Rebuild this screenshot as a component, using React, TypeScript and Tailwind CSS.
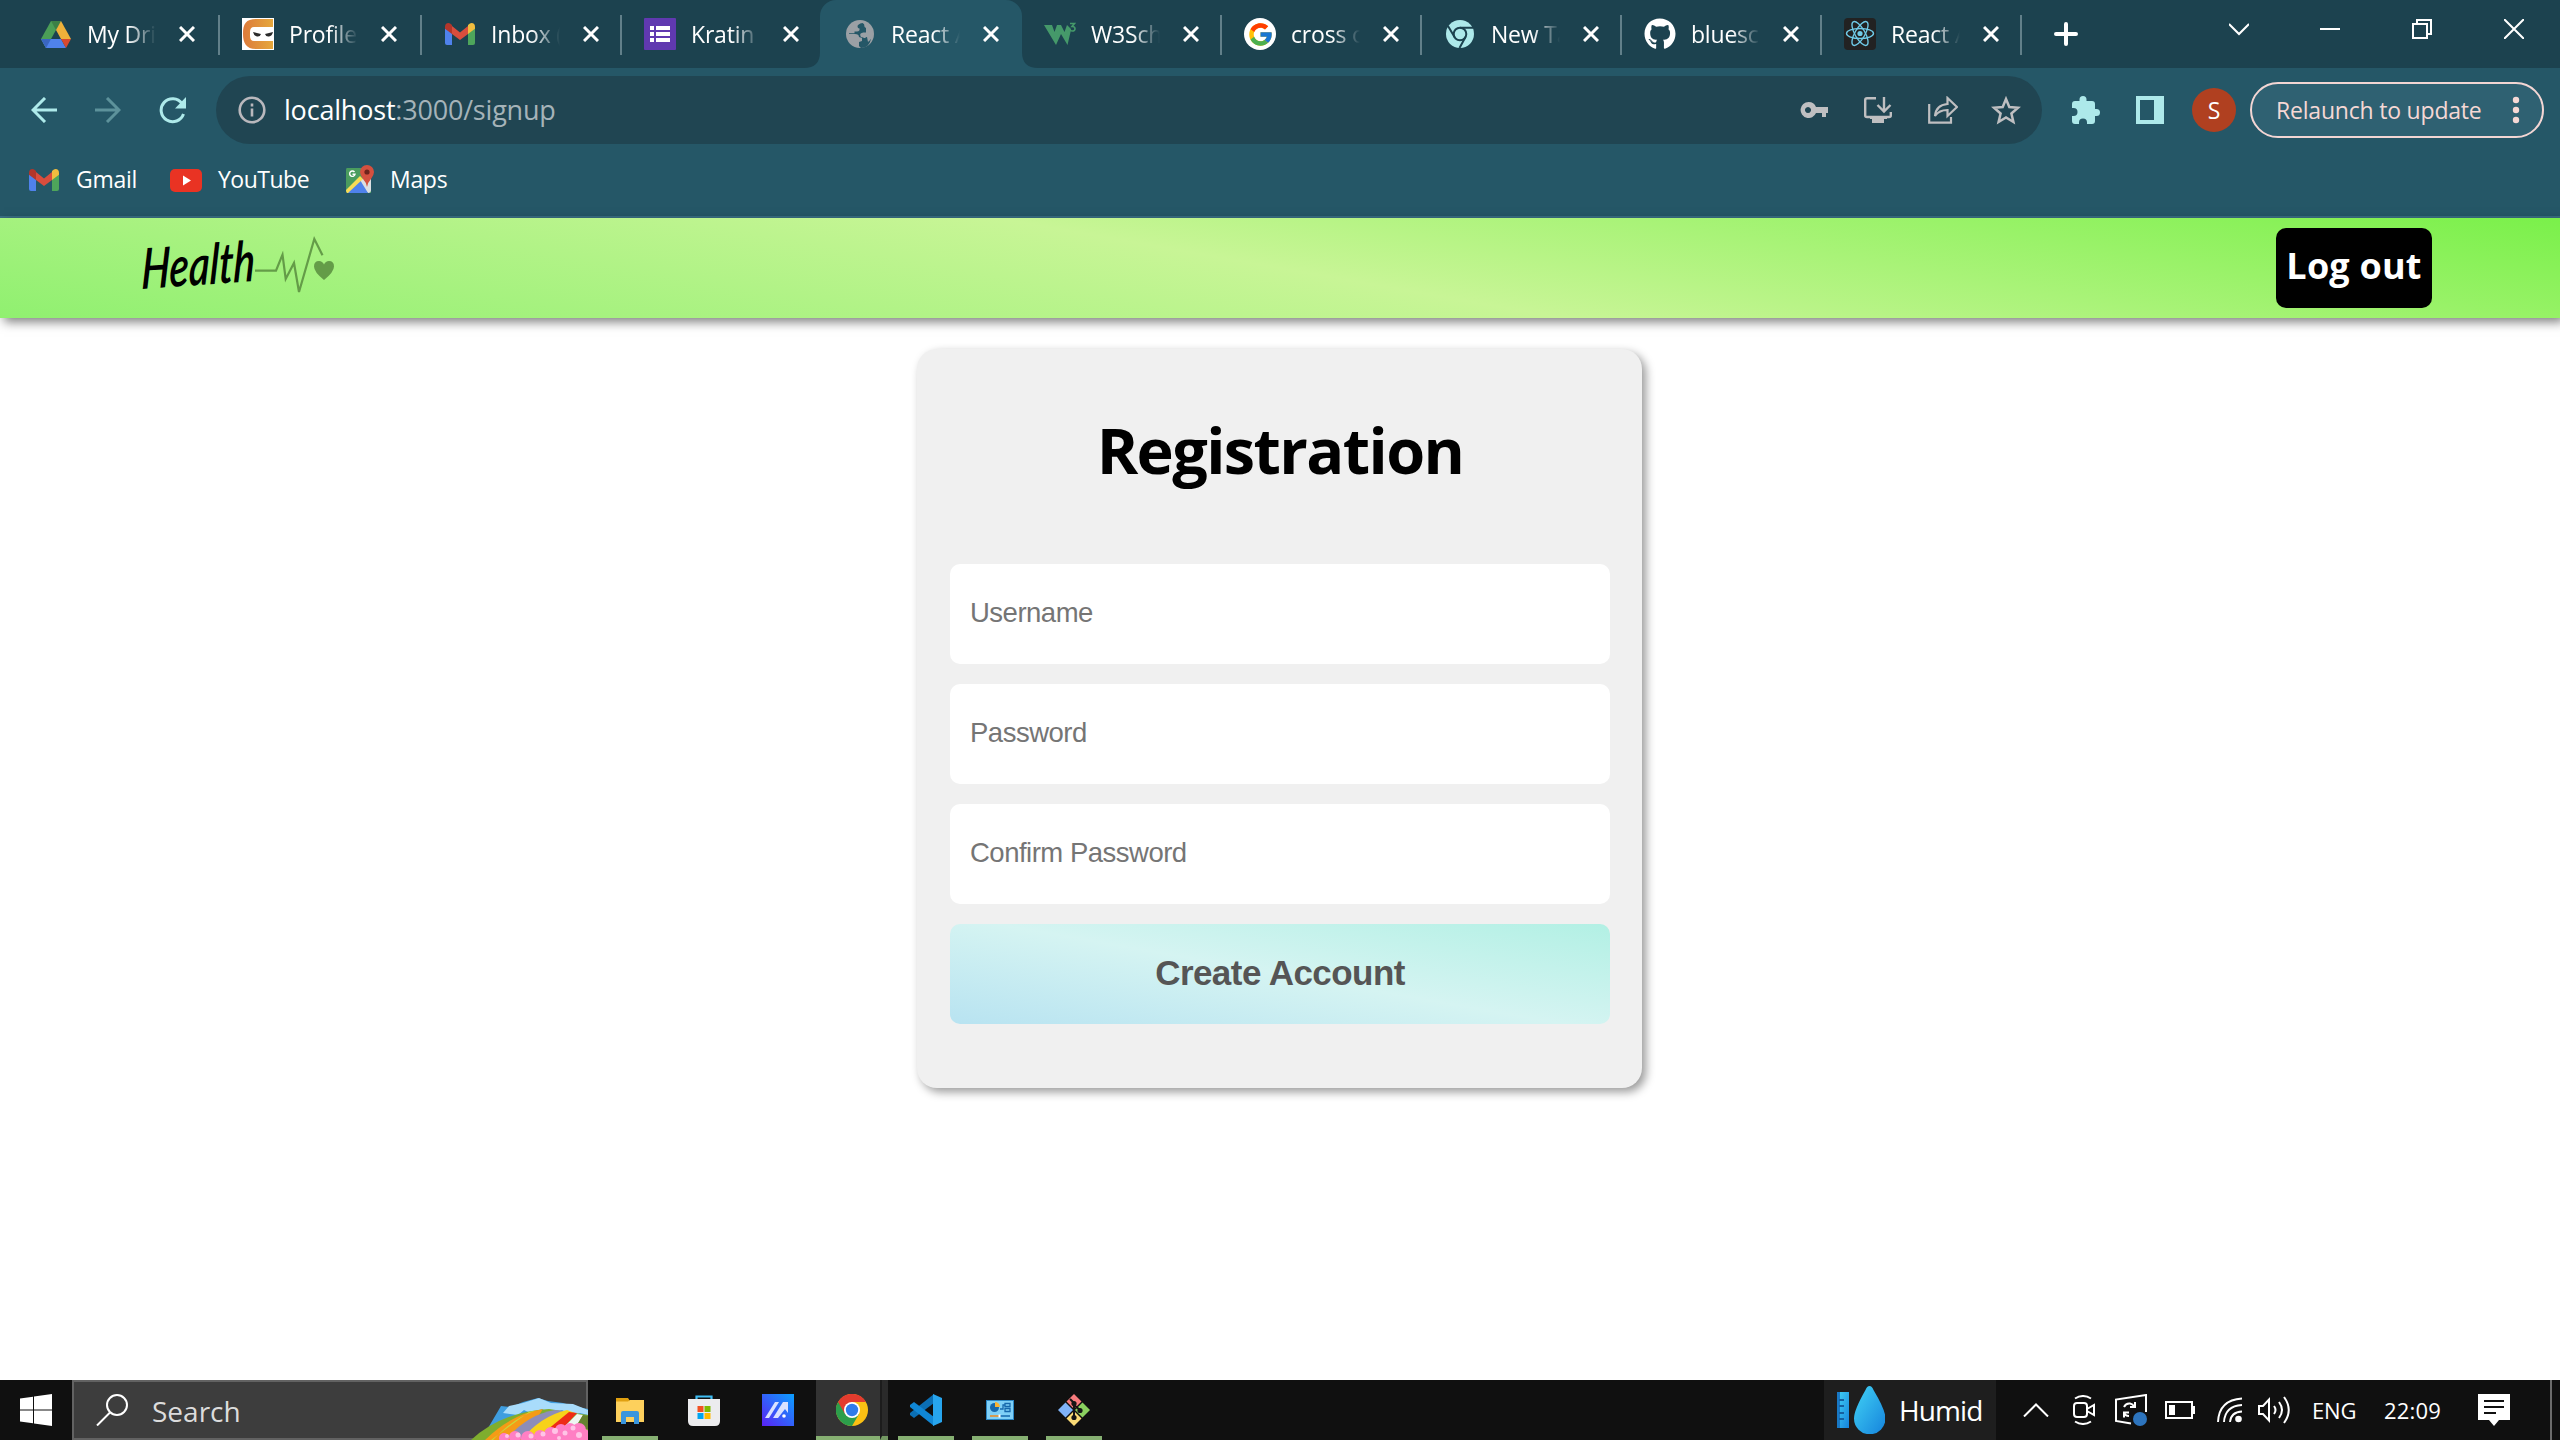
import React from "react";
import { FcGoogle } from "react-icons/fc";
import { FaGithub } from "react-icons/fa";

function Drive() {
  return (
    <svg viewBox="0 0 30 27" className="h-[27px] w-[30px]">
      <path d="M10 0h10L10 18 5 27 0 18z" fill="#4b9e57" />
      <path d="M10 0h10l-5 9z" fill="#3c8046" />
      <path d="M20 0l10 18H20l-5-9z" fill="#efb13a" />
      <path d="M10 18h10l5 9H5l-5-9z" fill="#4f82ec" />
      <path d="M5 27l5-9H0z" fill="#3a66c0" />
      <path d="M20 18h10l-5 9z" fill="#d8492f" />
    </svg>
  );
}

function Ninja() {
  return (
    <svg viewBox="0 0 32 32" className="size-8">
      <defs>
        <linearGradient id="cn">
          <stop stopColor="#dc7a3a" />
          <stop offset="1" stopColor="#e6a83c" />
        </linearGradient>
      </defs>
      <path d="M0 0h32v32H0z" fill="#fff" />
      <path d="M31 1H14C4 1 1 6 1 15.500S4 31 14 31h17v-8H12q-4 0-4-5v-4q0-5 4-5h19z" fill="url(#cn)" />
      <path d="M11 14l8 2q-1 3-4 2.500-3-.5-4-4.500zM31 14l-8 2q1 3 4 2.500 3-.5 4-4.500z" fill="#2b2b2b" />
    </svg>
  );
}

function Gmail() {
  return (
    <svg viewBox="0 0 30 22" className="h-[22px] w-[30px]">
      <path d="M0 5v15q0 2 2 2h5V10z" fill="#4f82ec" />
      <path d="M30 5v15q0 2-2 2h-5V10z" fill="#4ea55b" />
      <path d="M7 3l8 6.500L23 3v8l-8 6-8-6z" fill="#d94d3d" />
      <path d="M0 4q0-4 3.500-4Q5 0 7 2v9L0 5.800z" fill="#b3362b" />
      <path d="M30 4q0-4-3.500-4Q25 0 23 2v9l7-5.200z" fill="#f1bd3f" />
    </svg>
  );
}

function Forms() {
  return (
    <svg viewBox="0 0 32 32" className="size-8">
      <rect width="32" height="32" rx="1" fill="#6039b0" />
      <path d="M6 8h4v4H6zm6 0h14v4H12zM6 14h4v4H6zm6 0h14v4H12zM6 20h4v4H6zm6 0h14v4H12z" fill="#fff" />
    </svg>
  );
}

function Globe() {
  return (
    <svg viewBox="0 0 28 28" className="size-7">
      <circle cx="14" cy="14" r="14" fill="#9ba0a5" />
      <path
        d="M16.500 3q-5 1-5 3.500 0 2 2 2 .5 3-2.500 3H8.500v2H3q-.5 3 1 5.500h5.500q2.500 0 2.500 3v3l3 3q8 0 10-9l-1-4-2-2v3l-3 2h-4l-1-3 2-2h4V8q-2-1-2-4z"
        fill="#255767"
      />
      <path d="M3 13.500h8q3.500 0 3.500 3.500l3 .5V21l-3 1v3.500Q4 25 3 13.500z" fill="#255767" />
      <path d="M2 14h7q4 0 4 3l3 1v3l-3 1v4.500Q2 26 2 14zM17 3l7 4 1.500 4-4.500 1.500h-4L14 14l3 3h4l1 5q5-4 5-9-1-8-10-11z" fill="#9ba0a5" />
    </svg>
  );
}

function W3() {
  return (
    <svg viewBox="0 0 32 24" className="h-6 w-8">
      <path d="M0 3h8l2.500 7L13 3h4l3.500 7L23 3l4 4v1l-3.500 15L17 12l-5 11z" fill="#45996a" />
      <path d="M26 1.500h4.500L28 4.500q3 0 3 2.200Q31 9 28.200 9q-2 0-2.700-1.300" fill="none" stroke="#45996a" strokeWidth="1.600" />
    </svg>
  );
}

function Google() {
  return (
    <div className="flex size-8 items-center justify-center rounded-full bg-white">
      <FcGoogle size={27} />
    </div>
  );
}

function ChromeMono() {
  return (
    <svg viewBox="0 0 28 28" className="size-7">
      <circle cx="14" cy="14" r="14" fill="#ade9ea" />
      <circle cx="14" cy="14" r="6.300" fill="none" stroke="#1c424f" strokeWidth="2" />
      <path d="M14 7.700h13M8.500 17L2 6M19.500 17l-6 11" stroke="#1c424f" strokeWidth="2" />
    </svg>
  );
}

function ReactLogo() {
  return (
    <svg viewBox="0 0 32 32" className="size-8">
      <rect width="32" height="32" rx="4" fill="#222" />
      <g fill="none" stroke="#6fcbe8" strokeWidth="1.400">
        <ellipse cx="16" cy="15.500" rx="13.500" ry="5" />
        <ellipse cx="16" cy="15.500" rx="13.500" ry="5" transform="rotate(60 16 15.500)" />
        <ellipse cx="16" cy="15.500" rx="13.500" ry="5" transform="rotate(120 16 15.500)" />
      </g>
      <circle cx="16" cy="15.500" r="2.600" fill="#6fcbe8" />
    </svg>
  );
}

const tabs = [
  { t: "My Drive", w: "w-[202px] pl-[22px]", icon: <Drive /> },
  { t: "Profile |", w: "w-[202px] pl-[22px]", icon: <Ninja /> },
  { t: "Inbox (", w: "w-[200px] pl-[22px]", icon: <Gmail /> },
  { t: "Kratin -", w: "w-[198px] pl-[22px]", icon: <Forms /> },
  { t: "React App", w: "w-[202px] pl-[24px]", icon: <Globe />, active: true },
  { t: "W3Scho", w: "w-[200px] pl-[22px]", icon: <W3 /> },
  { t: "cross ori", w: "w-[200px] pl-[22px]", icon: <Google /> },
  { t: "New Tab", w: "w-[200px] pl-[22px]", icon: <ChromeMono /> },
  { t: "bluesco", w: "w-[200px] pl-[22px]", icon: <FaGithub size={32} color="#fff" /> },
  { t: "React App", w: "w-[200px] pl-[22px]", icon: <ReactLogo /> },
];

function Corner({ flip = false }: { flip?: boolean }) {
  return (
    <svg
      viewBox="0 0 16 16"
      className={flip ? "absolute bottom-0 left-full size-4 -scale-x-100" : "absolute right-full bottom-0 size-4"}
    >
      <path d="M16 0v16H0Q16 16 16 0z" fill="#255767" />
    </svg>
  );
}

function TabStrip() {
  return (
    <div className="flex h-[68px] bg-[#1c424f] pl-[18px] text-white">
      {tabs.map((tab, i) => (
        <div
          key={i}
          className={"relative flex h-full shrink-0 items-center " + tab.w + (tab.active ? " rounded-t-2xl bg-[#255767]" : "")}
        >
          {tab.active && (
            <>
              <Corner />
              <Corner flip />
            </>
          )}
          <div className="flex w-8 shrink-0 items-center justify-center">{tab.icon}</div>
          <div className="ml-[15px] w-[69px] shrink-0 overflow-hidden [mask-image:linear-gradient(90deg,#000_60%,transparent_100%)]">
            <span className="text-[23px] leading-8 tracking-[-0.2px] whitespace-nowrap">{tab.t}</span>
          </div>
          <svg viewBox="0 0 16 16" className="ml-[23px] size-4 shrink-0" stroke="#fff" strokeWidth="3">
            <path d="M1 1l14 14M15 1L1 15" />
          </svg>
          {!tab.active && i !== 3 && <div className="absolute top-[15px] right-0 h-10 w-0.5 bg-[#62808a]" />}
        </div>
      ))}
      <svg viewBox="0 0 24 24" className="mt-[22px] ml-[32px] size-6 shrink-0" stroke="#fff" strokeWidth="4" strokeLinecap="round">
        <path d="M12 2v20M2 12h20" />
      </svg>
      <svg viewBox="0 0 20 20" className="mt-[19px] ml-[151px] size-5 shrink-0" fill="none" stroke="#fff" strokeWidth="2">
        <path d="M0 5l10 10L20 5" />
      </svg>
      <div className="mt-7 ml-[71px] h-0.5 w-5 bg-white" />
      <svg viewBox="0 0 20 20" className="mt-[19px] ml-[72px] size-5 shrink-0" fill="none" stroke="#fff" strokeWidth="2">
        <path d="M1 5h14v14H1zM5 5V1h14v14h-4" />
      </svg>
      <svg viewBox="0 0 20 20" className="mt-[19px] ml-[72px] size-5 shrink-0" stroke="#fff" strokeWidth="2">
        <path d="M0 0l20 20M20 0L0 20" />
      </svg>
    </div>
  );
}

function Toolbar() {
  return (
    <div className="flex h-[84px] items-center bg-[#255767] pl-[31px]">
      <svg viewBox="0 0 26 26" className="size-[26px]" fill="none" stroke="#aeeaea" strokeWidth="3">
        <path d="M26 13H3M14 1L2 13l12 12" />
      </svg>
      <svg viewBox="0 0 26 26" className="ml-[38px] size-[26px]" fill="none" stroke="#5d929b" strokeWidth="3">
        <path d="M0 13h23M12 1l12 12-12 12" />
      </svg>
      <svg viewBox="0 0 27 27" className="ml-[38px] size-[27px]" fill="none" stroke="#aeeaea" strokeWidth="3">
        <path d="M23 6.500A11.500 11.500 0 1 0 24.500 17" />
        <path d="M27 0v11.500H16z" fill="#aeeaea" stroke="none" />
      </svg>
      <div className="ml-[30px] flex h-[68px] w-[1826px] items-center rounded-full bg-[#204552] pl-[22px]">
        <svg viewBox="0 0 28 28" className="size-7" fill="none" stroke="#b9b8bd" strokeWidth="2.600">
          <circle cx="14" cy="14" r="12.300" />
          <path d="M14 12.500V20.500M14 7.500v3" />
        </svg>
        <span className="ml-[18px] w-[1399px] text-[27px] leading-8 tracking-[-0.2px] text-white">
          localhost<span className="text-[#a5b3b9]">:3000/signup</span>
        </span>
        <svg viewBox="0 0 28 16" className="ml-[117px] h-4 w-7" fill="#bfbfc1">
          <path fillRule="evenodd" d="M8.500 0a8 8 0 0 1 7.500 5H28v6h-2v4h-4v-4h-6A8 8 0 1 1 8.500 0zM8 5a3 3 0 1 0 .01 0z" />
        </svg>
        <svg viewBox="0 0 28 26" className="ml-9 h-[26px] w-7" fill="none" stroke="#bfbfc1" strokeWidth="2.400">
          <path d="M12 1.200H3Q1.200 1.200 1.200 3v15.500q0 1.500 1.800 1.500h22q1.800 0 1.800-1.500V15M20 0v14M13.500 8l6.500 6.500L26.500 8" />
          <path d="M6 20h17v2h-3v4H8v-4H6z" fill="#bfbfc1" stroke="none" />
        </svg>
        <svg viewBox="0 0 30 28" className="ml-9 h-7 w-[30px]" fill="none" stroke="#bfbfc1" strokeWidth="2.200">
          <path d="M1.200 8v18.700H23V21M19.500 2v6Q8 9 7 20q4-6 12.500-6v6L29 11z" />
        </svg>
        <svg viewBox="0 0 30 29" className="ml-[33px] h-[29px] w-[30px]" fill="none" stroke="#bfbfc1" strokeWidth="2.500">
          <path d="M15 3l3.300 8 8.700.8-6.600 5.700 2 8.500L15 21.500 7.600 26l2-8.500L3 11.800l8.700-.8z" />
        </svg>
      </div>
      <svg viewBox="0 0 30 30" className="ml-[29px] size-[30px]" fill="#ade9ea">
        <path d="M8.500 6V4.500a3.500 3.500 0 0 1 7 0V6H21q3 0 3 3v5h1.500a3.500 3.500 0 0 1 0 7H24v5q0 3-3 3h-5v-1.500a4 4 0 0 0-8 0V29H4q-3 0-3-3v-5h1.500a4 4 0 0 0 0-8H1V9q0-3 3-3z" />
      </svg>
      <svg viewBox="0 0 28 28" className="ml-[35px] size-7">
        <path fillRule="evenodd" d="M0 0h28v28H0zM4 4v20h14V4z" fill="#ade9ea" />
      </svg>
      <div className="ml-7 flex size-11 items-center justify-center rounded-full bg-[#b04020] text-[23px] text-white">S</div>
      <div className="ml-[14px] flex h-14 w-[294px] items-center rounded-full border-2 border-[#f3d6d4] bg-[#2f6172] pl-6 text-[#f5d8d5]">
        <span className="w-[215px] text-[23px] tracking-[-0.2px] whitespace-nowrap">Relaunch to update</span>
        <svg viewBox="0 0 8 28" className="ml-[21px] h-7 w-2" fill="#f5d8d5">
          <circle cx="4" cy="4" r="3.200" />
          <circle cx="4" cy="14" r="3.200" />
          <circle cx="4" cy="24" r="3.200" />
        </svg>
      </div>
    </div>
  );
}

function Bookmarks() {
  return (
    <div className="flex h-[66px] items-center border-b-2 border-[#3a7084] bg-[#255767] pb-2 pl-[29px] text-[23px] tracking-[-0.3px] text-white">
      <Gmail />
      <span className="-mt-0.5 ml-[17px] w-[94px]">Gmail</span>
      <svg viewBox="0 0 32 23" className="h-[23px] w-8">
        <rect width="32" height="23" rx="5" fill="#e93323" />
        <path d="M13 6.500l8 5-8 5z" fill="#fff" />
      </svg>
      <span className="-mt-0.5 ml-4 w-[127px] tracking-[-0.5px]">YouTube</span>
      <svg viewBox="0 0 30 30" className="size-[30px]">
        <path d="M2 3h24v25H2q-1-1-1-3V5q0-2 1-2z" fill="#4a9c5e" />
        <path d="M13 17l13-9v17q0 3-3 3z" fill="#dcdfe2" />
        <path d="M15 15l-13 13h21z" fill="#4f82ec" />
        <path d="M1 25L15 11l3 3L3 28H2q-1-1-1-3z" fill="#f9dc55" />
        <path d="M22 0a7 7 0 0 1 7 7q0 3-3 7-3 3-4 8-1-5-4-8-3-4-3-7a7 7 0 0 1 7-7z" fill="#d4503f" />
        <circle cx="22" cy="7" r="2.600" fill="#6e231c" />
        <path d="M9.500 7A2.700 2.700 0 1 0 10 9.300H7.500" fill="none" stroke="#fff" strokeWidth="1.400" />
      </svg>
      <span className="-mt-0.5 ml-[15px]">Maps</span>
    </div>
  );
}

function SiteHeader() {
  return (
    <header className="relative flex h-[100px] items-start justify-between bg-[linear-gradient(10deg,#90f070_0%,#c8f596_50%,#7af04a_100%)] pr-32 pl-[142px] shadow-[4px_4px_10px_rgba(0,0,0,0.5)]">
      <div className="flex h-full">
        <span className="mt-[20px] block w-[114px] origin-bottom-left -rotate-[4deg] font-['Lato',sans-serif] text-[56px] leading-[60px] font-semibold text-black italic">
          <span className="block origin-bottom-left scale-x-[0.72] -skew-x-8">Health</span>
        </span>
        <svg viewBox="0 0 80 60" className="mt-[18px] -ml-px h-[60px] w-20" fill="none" stroke="#649c48" strokeWidth="2.200">
          <path d="M0 34.700h21l6.500-16L30.700 43 39 27l5 29L59.300 3l8.200 16.300" />
          <path d="M69 44q-10-8-10-13.500 0-5.500 5-5.500 3.500 0 5 3.500 1.500-3.500 5-3.500 5 0 5 5.500Q79 36 69 44z" fill="#649c48" stroke="none" />
        </svg>
      </div>
      <button className="mt-2.5 flex h-20 w-[156px] items-center justify-center rounded-[10px] bg-black pb-1 text-[36px] font-bold tracking-[0.2px] whitespace-nowrap text-white">
        Log out
      </button>
    </header>
  );
}

const field =
  "h-[100px] w-full rounded-[10px] bg-white px-5 pb-0.5 font-['Liberation_Sans',sans-serif] text-[27.500px] tracking-[-0.5px] text-[#757575] placeholder-[#757575] outline-none";

function Page() {
  return (
    <main className="flex flex-1 flex-col bg-white">
      <SiteHeader />
      <form className="mt-[31px] ml-[917px] flex h-[739px] w-[725px] flex-col items-center gap-5 rounded-[20px] bg-[#f0f0f0] pr-8 pl-[33px] shadow-[4px_4px_10px_rgba(0,0,0,0.4)]">
        <h1 className="mt-[57px] mb-[51px] text-[63px] leading-[87px] font-bold tracking-[-1.6px] text-black">Registration</h1>
        <input className={field} placeholder="Username" />
        <input className={field} placeholder="Password" />
        <input className={field} placeholder="Confirm Password" />
        <button
          type="button"
          className="h-[100px] w-full rounded-[10px] bg-[linear-gradient(10deg,#b8e3f1_0%,#d5f4f2_50%,#b2f0e4_100%)] pb-0.5 font-['Liberation_Sans',sans-serif] text-[35px] font-bold tracking-[-0.55px] text-[#555]"
        >
          Create Account
        </button>
      </form>
    </main>
  );
}

function SearchArt() {
  return (
    <svg viewBox="0 0 117 42" className="h-[42px] w-[117px]">
      <path d="M10 42L30 8l10 1 12-5 15-4 10 3 15 2 10 3 15 3v31z" fill="#3f9ee0" />
      <path d="M32 15l6-7 14-3 16-5 12 5 22 1 15 6v5l-8-2-8 3-10-6-10 4-10-5-10 5-8-4-6 5z" fill="#a9dcfb" />
      <path d="M0 42Q30 14 78 11l39 6v25z" fill="#7fae2e" />
      <path d="M14 42Q40 16 72 11L52 42z" fill="#f59b16" />
      <path d="M22 42Q42 20 66 12l-8 2-38 28z" fill="#c8d93a" />
      <path d="M36 40Q58 16 84 12l10 1L56 42z" fill="#8d8db8" />
      <path d="M50 42Q70 18 96 12l8 3-26 24z" fill="#f7d21a" />
      <path d="M76 32l22-18 8 1-14 15z" fill="#ee2b16" />
      <path d="M92 30l14-14 6 1-8 14z" fill="#eef6f1" />
      <path d="M104 30l8-13 5 1v13z" fill="#66832f" />
      <g fill="#ff7fc4">
        <circle cx="33" cy="40" r="5" /><circle cx="44" cy="39" r="6" /><circle cx="57" cy="40" r="7" />
        <circle cx="69" cy="38" r="6" /><circle cx="80" cy="36" r="7" /><circle cx="90" cy="32" r="6" />
        <circle cx="99" cy="31" r="6" /><circle cx="108" cy="32" r="7" /><circle cx="113" cy="37" r="6" />
        <path d="M75 34h42v8H70z" />
      </g>
      <g fill="#ffc4e6">
        <circle cx="36" cy="38" r="2" /><circle cx="47" cy="37" r="2.500" /><circle cx="60" cy="38" r="2.500" />
        <circle cx="72" cy="36" r="2.500" /><circle cx="84" cy="33" r="3" /><circle cx="94" cy="35" r="2.500" />
        <circle cx="102" cy="30" r="2.500" /><circle cx="108" cy="37" r="3" /><circle cx="88" cy="40" r="2" />
      </g>
    </svg>
  );
}

const apps = [
  {
    run: true,
    icon: (
      <svg viewBox="0 0 28 26" className="mt-[2px] h-[26px] w-7">
        <path d="M0 0h12l2 3v4H0z" fill="#e0a010" />
        <path d="M0 3.500h12l2-1.500h14v22H0z" fill="#fdd05c" />
        <path d="M5 15q0-2 2-2h14q2 0 2 2v11h-5v-7h-8v7H5z" fill="#3a96dd" />
      </svg>
    ),
  },
  {
    icon: (
      <svg viewBox="0 0 32 32" className="size-8">
        <path d="M8.500 7V2.500h15V7" fill="none" stroke="#3fbdf3" strokeWidth="2.200" />
        <path d="M0 5h32v22q0 5-5 5H5q-5 0-5-5z" fill="#ececee" />
        <path d="M9.500 12h6v6h-6z" fill="#f25022" />
        <path d="M16.500 12h6v6h-6z" fill="#7fba00" />
        <path d="M9.500 19h6v6h-6z" fill="#00a4ef" />
        <path d="M16.500 19h6v6h-6z" fill="#ffb900" />
      </svg>
    ),
  },
  {
    icon: (
      <svg viewBox="0 0 32 32" className="size-8">
        <defs>
          <linearGradient id="ma" x1="0" y1="1" x2="1" y2="0">
            <stop stopColor="#5a22f5" />
            <stop offset="1" stopColor="#0aa0ff" />
          </linearGradient>
        </defs>
        <path d="M0 0h32v32H0z" fill="url(#ma)" />
        <path d="M3 24L13 8h4L7 24zM11 24L21 8h5v11l-3-4-7 9z" fill="#d9e2ff" />
        <circle cx="22" cy="22" r="1.800" fill="#fff" />
      </svg>
    ),
  },
  {
    run: true,
    active: true,
    icon: (
      <svg viewBox="0 0 32 32" className="size-8">
        <circle cx="16" cy="16" r="16" fill="#fbc013" />
        <path d="M2.100 8A16 16 0 0 0 16 32l7-12-7-4z" fill="#2c9e4b" />
        <path d="M16 8h13.900A16 16 0 0 0 2.100 8L9 20z" fill="#e33b2e" />
        <circle cx="16" cy="16" r="8" fill="#fff" />
        <circle cx="16" cy="16" r="6.200" fill="#2f7bea" />
      </svg>
    ),
  },
  {
    run: true,
    icon: (
      <svg viewBox="0 0 32 32" className="size-8">
        <path d="M24 0v9L4 24l-4-3v-2z" fill="#0b6fb5" />
        <path d="M24 32v-9L4 8 0 11v2z" fill="#1087d6" />
        <path d="M23 0l9 4v24l-9 4z" fill="#27a5ee" />
      </svg>
    ),
  },
  {
    run: true,
    icon: (
      <svg viewBox="0 0 28 20" className="h-5 w-7">
        <path d="M0 0h28v20H0z" fill="#2a86c4" />
        <path d="M1 1h26v18H1z" fill="#7fd0f7" />
        <circle cx="8.500" cy="7.500" r="4.500" fill="#1668ad" />
        <path d="M9 7V2a5 5 0 0 1 5 5z" fill="#f9b233" />
        <path d="M19 3.500h5v3h-5zm0 5h5v3h-5zM14 9h3V5h2" fill="none" stroke="#1668ad" strokeWidth="1.300" />
        <path d="M4 16h9" stroke="#f08a1c" strokeWidth="1.500" />
        <path d="M14 16h10" stroke="#1668ad" strokeWidth="1.500" />
        <path d="M12.500 14.500h2v3h-2z" fill="#fff" />
      </svg>
    ),
  },
  {
    run: true,
    icon: (
      <svg viewBox="0 0 32 32" className="size-8">
        <path d="M16 0l7.500 7.500L16 15 8.500 7.500z" fill="#f77b7d" />
        <path d="M24.500 8.500L32 16l-7.500 7.500L17 16z" fill="#8bd15f" />
        <path d="M7.500 8.500L15 16l-7.500 7.500L0 16z" fill="#80b3f8" />
        <path d="M16 17l7.500 7.500L16 32l-7.500-7.500z" fill="#fbdb76" />
        <path d="M12 5l4 4v14M16 11l6 5" fill="none" stroke="#151515" strokeWidth="2" />
        <circle cx="16" cy="9.500" r="2.600" fill="#151515" />
        <circle cx="16" cy="23.500" r="2.600" fill="#151515" />
        <circle cx="22" cy="16.500" r="2.600" fill="#151515" />
      </svg>
    ),
  },
];

function Taskbar() {
  return (
    <footer className="flex h-[60px] items-center bg-[#101010] text-white">
      <svg viewBox="0 0 32 32" className="ml-5 size-8" fill="#fff">
        <path d="M0 4.500L13 2.700V15.500H0zM14 2.500L32 0v15.500H14zM0 16.500h13v12.800L0 27.500zM14 16.500h18V32l-18-2.500z" />
      </svg>
      <div className="ml-5 flex h-[60px] w-[516px] items-center border-2 border-[#626262] bg-[#3d3d3d] pl-[22px]">
        <svg viewBox="0 0 32 32" className="size-8" fill="none" stroke="#fff" strokeWidth="2">
          <circle cx="21" cy="11" r="10" />
          <path d="M14 18.500L1 31.500" />
        </svg>
        <span className="mt-0.5 ml-6 flex-1 text-[28px] text-[#dcdcdc]">Search</span>
        <div className="-mr-0.5 -mb-0.5 self-end">
          <SearchArt />
        </div>
      </div>
      <div className="ml-[5px] flex h-full">
        {apps.map((a, i) => (
          <div key={i} className="flex h-full w-[74px] justify-center">
            <div
              className={
                "relative flex h-full items-center justify-center " +
                (a.active ? "w-[72px] bg-[#333] " : "w-14 ") +
                (a.run ? "border-b-4 border-[#86b072] pt-1" : "")
              }
            >
              {a.icon}
              {a.active && (
                <div className="absolute top-0 right-0 h-[60px] w-2 border-b-4 border-l-2 border-b-[#739862] border-l-[#1c1c1c] bg-[#2a2a2a]" />
              )}
            </div>
          </div>
        ))}
      </div>
      <div className="ml-auto flex h-full w-[172px] items-center bg-[#1e1e1e] pl-[13px]">
        <svg viewBox="0 0 48 48" className="size-12">
          <defs>
            <linearGradient id="dr" x1="0" y1="0" x2="1" y2="1">
              <stop stopColor="#42d3f5" />
              <stop offset="1" stopColor="#1583dc" />
            </linearGradient>
          </defs>
          <path d="M0 6h12v36H0z" fill="url(#dr)" />
          <path d="M0 6h3v36H0z" fill="#1878c4" />
          <path d="M2 14h5M2 20h5M2 27h5M2 33h5" stroke="#15609f" strokeWidth="2" />
          <path d="M32.500 0q2.500 0 4 4 12 20 12 28.500A15.500 15.500 0 0 1 17 32.500Q17 24 28.500 4q1.500-4 4-4z" fill="url(#dr)" />
        </svg>
        <span className="ml-[14px] text-[28px] tracking-[-0.9px]">Humid</span>
      </div>
      <svg viewBox="0 0 26 14" className="ml-[27px] h-[14px] w-[26px]" fill="none" stroke="#fff" strokeWidth="2">
        <path d="M1 13.500L13 1.500l12 12" />
      </svg>
      <svg viewBox="0 0 22 30" className="ml-[24px] h-[30px] w-[22px]" fill="none" stroke="#fff" strokeWidth="2">
        <rect x="1" y="8" width="13" height="14" rx="3" />
        <path d="M14 14l7-4v10l-7-4M2 3.500q8-5 16 0M2 26.500q8 5 16 0" />
      </svg>
      <svg viewBox="0 0 34 32" className="ml-[20px] h-8 w-[34px]" fill="none" stroke="#fff" strokeWidth="2">
        <path d="M31 18V1L1 5.500V27l15 2.500M9 13q2-4 6-3.500 3 .5 4 3M20 8v5h-5M9 18.500q1 3.500 5 3.500M9 23.500v-5h5" />
        <circle cx="25" cy="25" r="7" fill="#2d74bd" stroke="none" />
      </svg>
      <svg viewBox="0 0 30 18" className="ml-4 h-[18px] w-[30px]" fill="none" stroke="#fff" strokeWidth="2">
        <path d="M1 1h26v16H1zM27 6h2v6h-2" />
        <path d="M4 4h6v10H4z" fill="#fff" stroke="none" />
      </svg>
      <svg viewBox="0 0 26 26" className="ml-[22px] size-[26px]" fill="none" stroke="#fff" strokeWidth="1.900">
        <path d="M1 25Q2 3 25 1.500M7 25Q8 9 25 8M13 25q1-10 12-10.500" />
        <circle cx="21.500" cy="22" r="3.300" fill="#fff" stroke="none" />
      </svg>
      <svg viewBox="0 0 34 28" className="ml-[15px] h-7 w-[34px]" fill="none" stroke="#fff" strokeWidth="2">
        <path d="M1 10h4l6-6.500v21L5 18H1zM16 10q3 4 0 8M21 6q6 8 0 16M26 1q9.500 13 0 26" />
      </svg>
      <span className="ml-[20px] w-[49px] text-[22px] tracking-[-0.2px]">ENG</span>
      <span className="ml-[23px] w-[62px] text-[22px] tracking-[0.2px]">22:09</span>
      <svg viewBox="0 0 32 32" className="ml-8 size-8">
        <path d="M0 0h32v26H21l-5 6-5-6H0z" fill="#fff" />
        <path d="M6 7h20M6 13h20M6 19h12" stroke="#101010" strokeWidth="2" />
      </svg>
      <div className="mr-2 ml-10 h-full w-0.5 bg-[#6c6c6c]" />
    </footer>
  );
}

export default function App() {
  return (
    <div className="flex h-[1440px] w-[2560px] flex-col overflow-hidden bg-white font-['Open_Sans','Noto_Sans',sans-serif]">
      <TabStrip />
      <Toolbar />
      <Bookmarks />
      <Page />
      <Taskbar />
    </div>
  );
}
